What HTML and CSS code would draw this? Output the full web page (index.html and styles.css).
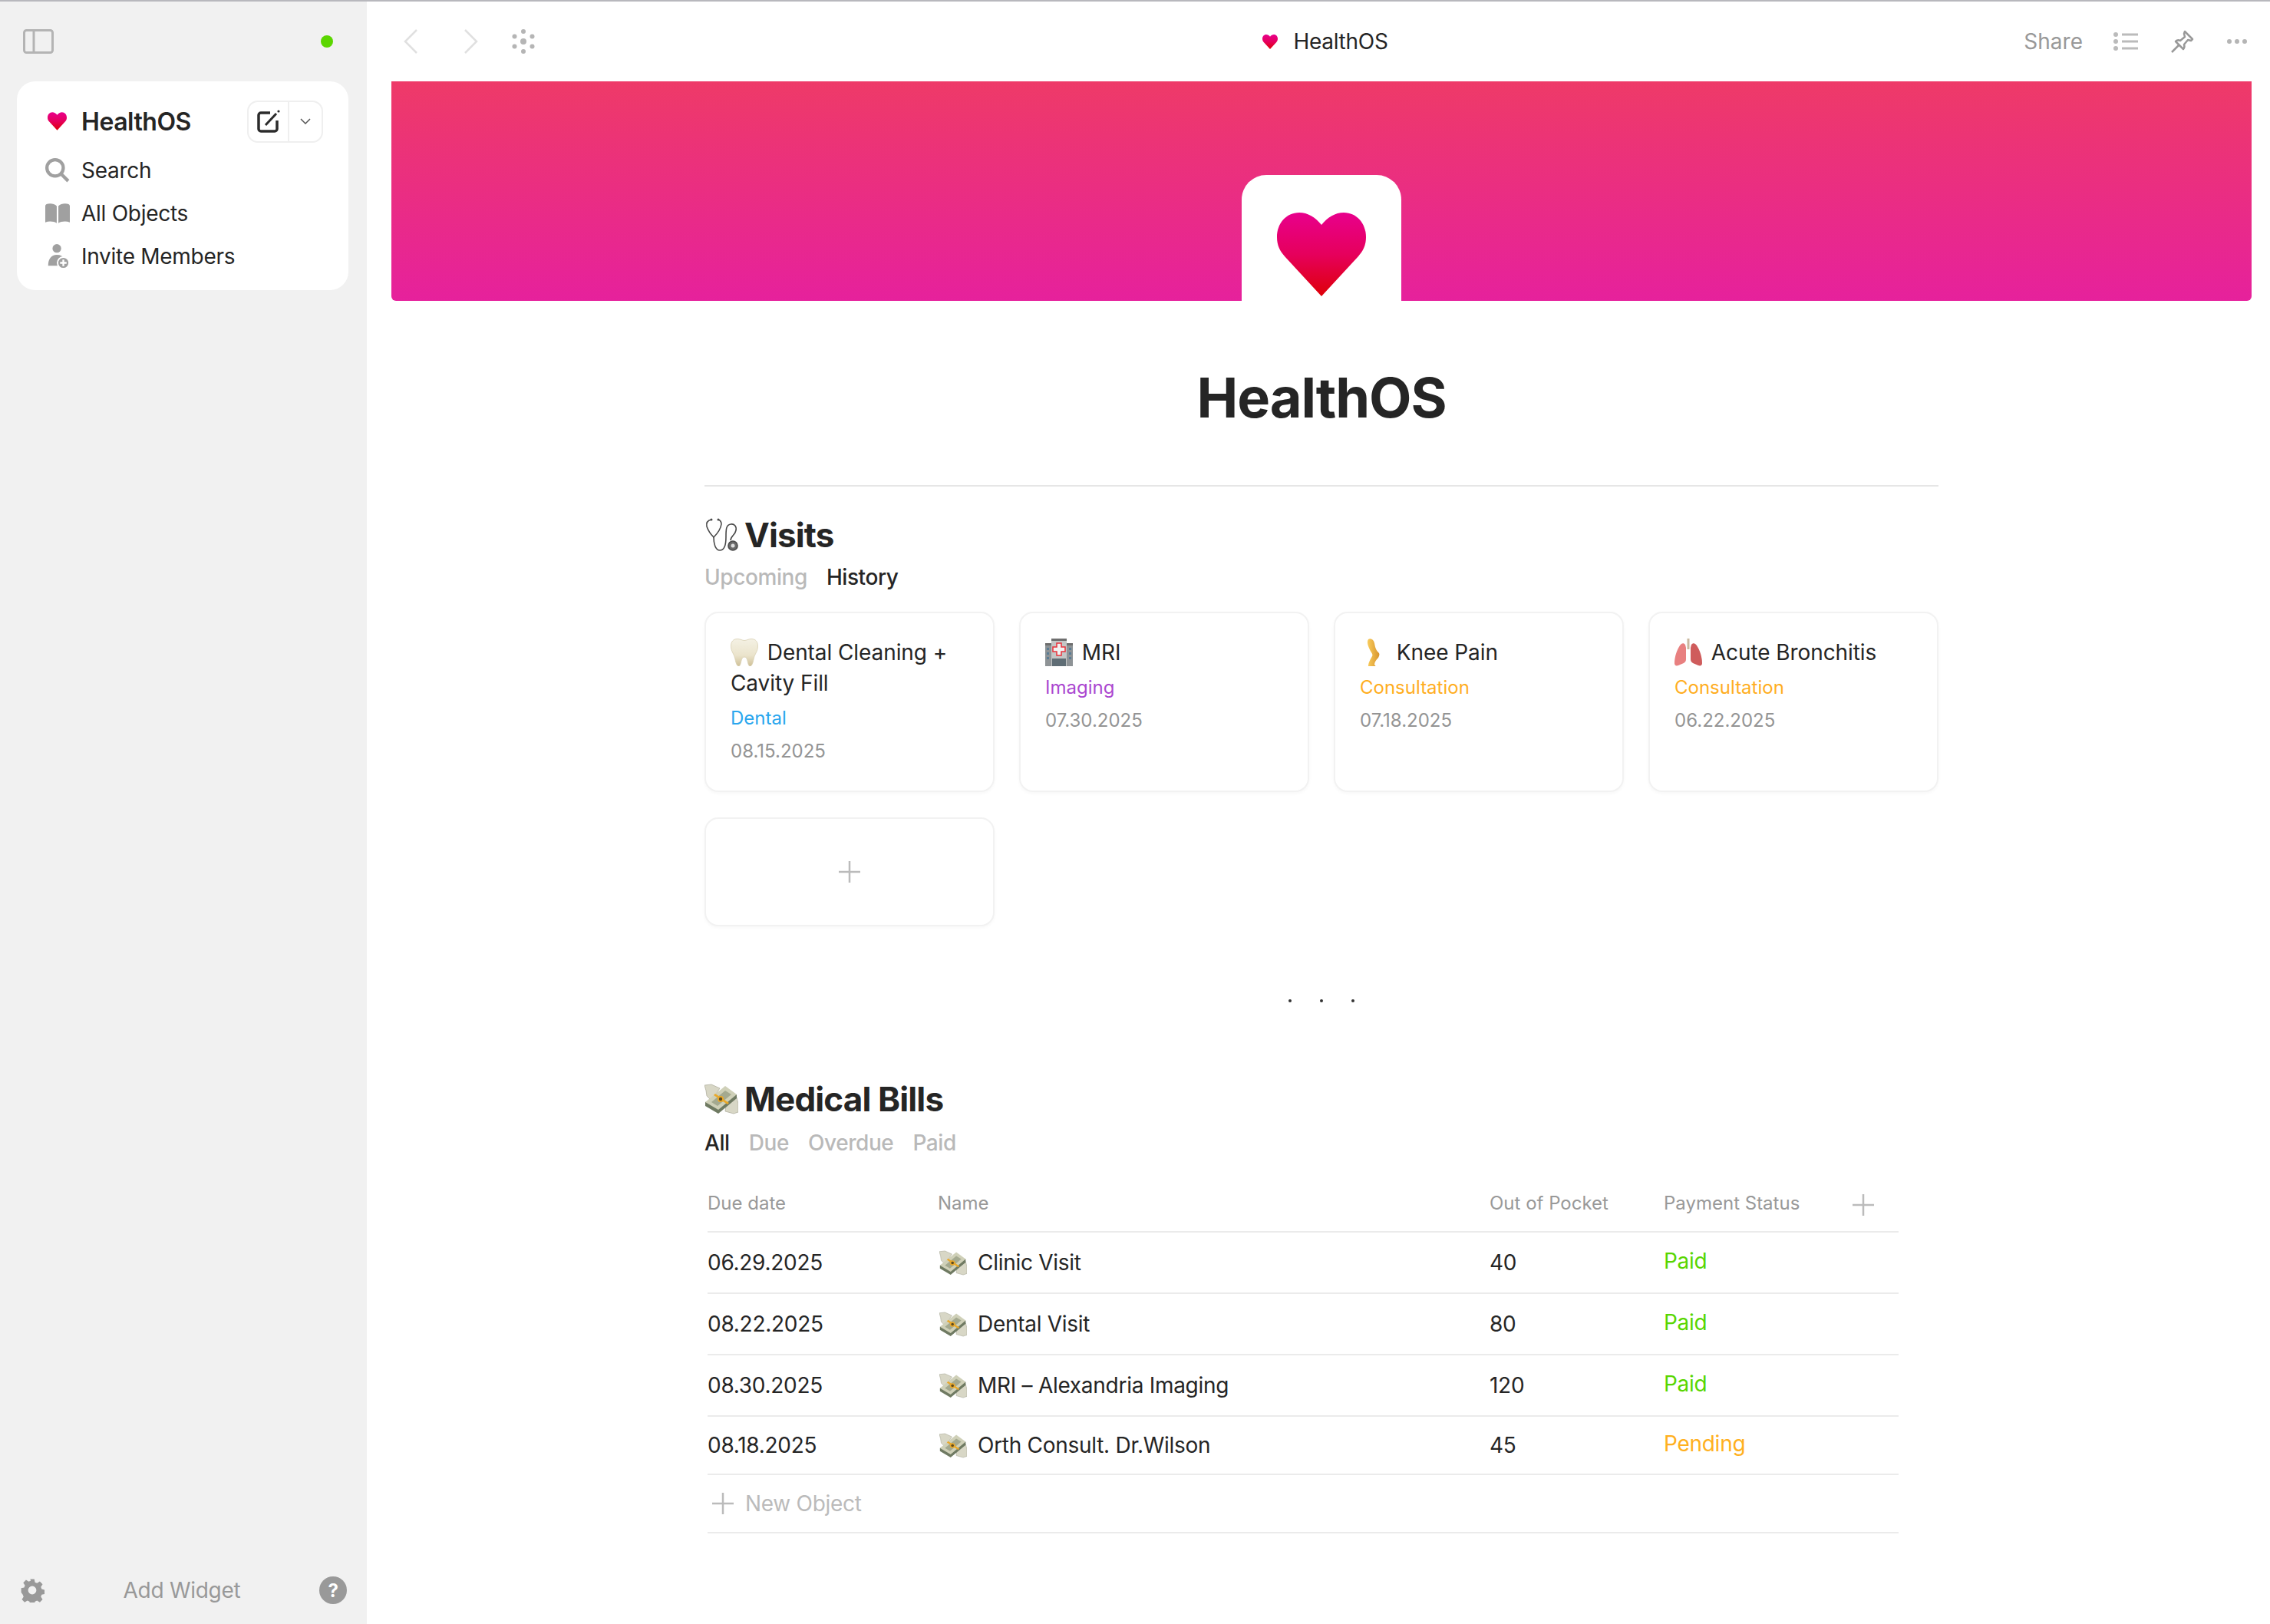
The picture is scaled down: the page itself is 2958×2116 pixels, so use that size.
FILE: index.html
```html
<!DOCTYPE html>
<html lang="en">
<head>
    <meta charset="UTF-8">
    <meta name="viewport" content="width=device-width, initial-scale=1.0">
    <title>HealthOS</title>
    <link rel="stylesheet" href="styles.css">
</head>
<body>
    <!-- Shared icons -->
    <svg class="icon-defs" aria-hidden="true">
        <defs>
            <linearGradient id="heart-fill" x1="0" y1="0" x2="0" y2="1">
                <stop offset="0" stop-color="#e8008c"/>
                <stop offset="0.5" stop-color="#e6005c"/>
                <stop offset="1" stop-color="#de0008"/>
            </linearGradient>
            <linearGradient id="tooth-fill" x1="0" y1="0" x2="0" y2="1">
                <stop offset="0" stop-color="#f4f1e4"/>
                <stop offset="0.6" stop-color="#ebe4cc"/>
                <stop offset="1" stop-color="#cfc097"/>
            </linearGradient>
            <linearGradient id="leg-fill" x1="0" y1="0" x2="1" y2="0">
                <stop offset="0" stop-color="#f9cc5c"/>
                <stop offset="1" stop-color="#d8952e"/>
            </linearGradient>
            <symbol id="heart" viewBox="0 0 116 109">
                <path fill="url(#heart-fill)" d="M58 16C50 6 40 0 29 0 12 0 0 14 0 32c0 11 4 18 10 25l48 52 48-52c6-7 10-14 10-25 0-18-12-32-29-32-11 0-21 6-29 16z"/>
            </symbol>
            <symbol id="money" viewBox="0 0 44 40">
                <path fill="#d8d7c6" stroke="#a9a897" stroke-width=".7" d="M0 2l9-1 11 5-6 9-6 6-5-5-1-7z"/>
                <path fill="#d8d7c6" stroke="#a9a897" stroke-width=".7" d="M28 28l14-10 2 8v11l-6 2-11-3z"/>
                <path fill="#6f7a62" d="M1 24v5l17 10 24-20v-5z"/>
                <path fill="#cfd0b8" d="M1 24L27 3l15 11-24 20z"/>
                <path fill="#a4a98f" d="M9 24L27 9l8 5-18 15z"/>
                <path fill="#eaa92a" d="M12 15l2-2 18 12-2 2z"/>
                <circle cx="21" cy="20" r="4" fill="#eaa92a"/>
                <circle cx="21" cy="20" r="2.200" fill="#5d4a20"/>
            </symbol>
        </defs>
    </svg>

    <aside class="sidebar">
        <div class="sidebar-top">
            <svg class="panel-icon" viewBox="0 0 40 32"><rect x="1.5" y="1.5" width="37" height="29" rx="3" fill="none" stroke="#b4b4b4" stroke-width="3"/><path d="M14 2v28" stroke="#b4b4b4" stroke-width="3"/></svg>
            <span class="status-dot"></span>
        </div>
        <div class="space-card">
            <div class="space-head">
                <svg class="space-heart"><use href="#heart"/></svg>
                <span class="space-name">HealthOS</span>
                <div class="new-btn">
                    <span class="new-btn-main">
                        <svg viewBox="0 0 30 30" width="30" height="30"><path d="M17 4H5a3 3 0 0 0-3 3v18a3 3 0 0 0 3 3h18a3 3 0 0 0 3-3V14" fill="none" stroke="#2b2b2b" stroke-width="3.500"/><path d="M11 20L25 5" stroke="#2b2b2b" stroke-width="3"/><circle cx="28" cy="2" r="1.600" fill="#2b2b2b"/></svg>
                    </span>
                    <span class="new-btn-arrow">
                        <svg viewBox="0 0 14 8" width="14" height="8"><path d="M1 1l6 6 6-6" fill="none" stroke="#555" stroke-width="1.500"/></svg>
                    </span>
                </div>
            </div>
            <div class="nav-row">
                <svg class="nav-icon" viewBox="0 0 30 30"><circle cx="12" cy="12" r="10" fill="none" stroke="#a0a0a0" stroke-width="4"/><path d="M19 19l9 9" stroke="#a0a0a0" stroke-width="4"/></svg>
                Search
            </div>
            <div class="nav-row">
                <svg class="nav-icon" viewBox="0 0 30 24"><path fill="#a0a0a0" d="M0 3c0-2 2-3 6-3 3 0 6 1 8 3v21c-3-2-9-3-14-1zM30 3c0-2-2-3-6-3-3 0-6 1-8 3v21c3-2 9-3 14-1z"/></svg>
                All Objects
            </div>
            <div class="nav-row">
                <svg class="nav-icon" viewBox="0 0 32 34"><circle cx="15" cy="6" r="6" fill="#a0a0a0"/><path fill="#a0a0a0" d="M3 30c0-9 4-15 12-15 5 0 9 2 11 6l-8 9z"/><circle cx="24" cy="26" r="8" fill="#a0a0a0" stroke="#fff" stroke-width="2"/><path d="M24 21.500v9M19.500 26h9" stroke="#fff" stroke-width="2.500"/></svg>
                Invite Members
            </div>
        </div>
        <div class="sidebar-foot">
            <svg class="gear" viewBox="0 0 32 32"><path fill="#999" fill-rule="evenodd" d="M13 0h6l1 4.500 3 1.300 4-2.500 4 4.200-2.500 3.900 1.200 3 4.300 1v6l-4.300 1-1.200 3 2.500 3.900-4 4.200-4-2.500-3 1.300-1 4.200h-6l-1-4.200-3-1.300-4 2.500-4-4.200 2.500-3.900-1.200-3L0 19v-6l4.300-1 1.200-3L3 5.100l4-4.200 4 2.500 3-1.300zM16 10a6 6 0 1 0 0 12 6 6 0 0 0 0-12z" transform="translate(1.600 1.600) scale(.9)"/></svg>
            <span class="add-widget">Add Widget</span>
            <span class="help">?</span>
        </div>
    </aside>

    <main class="main">
        <header class="topbar">
            <div class="topbar-left">
                <svg viewBox="0 0 18 32" width="18" height="32"><path d="M17 1L2 16l15 15" fill="none" stroke="#e0e0e0" stroke-width="2.500"/></svg>
                <svg viewBox="0 0 18 32" width="18" height="32"><path d="M1 1l15 15L1 31" fill="none" stroke="#e0e0e0" stroke-width="2.500"/></svg>
                <svg class="graph-icon" viewBox="0 0 30 32" width="30" height="32" fill="#b5b5b5"><circle cx="15" cy="16" r="4"/><circle cx="15" cy="3" r="3"/><circle cx="15" cy="29" r="3"/><circle cx="3.500" cy="9.500" r="3"/><circle cx="26.500" cy="9.500" r="3"/><circle cx="3.500" cy="22.500" r="3"/><circle cx="26.500" cy="22.500" r="3"/></svg>
            </div>
            <div class="topbar-title">
                <svg class="title-heart"><use href="#heart"/></svg>
                HealthOS
            </div>
            <div class="topbar-right">
                <span class="share">Share</span>
                <svg viewBox="0 0 32 24" width="32" height="24" fill="#bbb"><circle cx="3" cy="3" r="3"/><circle cx="3" cy="12" r="3"/><circle cx="3" cy="21" r="3"/><path d="M11 1.500h21v3H11zM11 10.500h21v3H11zM11 19.500h21v3H11z"/></svg>
                <svg viewBox="0 0 30 30" width="30" height="30"><path d="M18 2l10 10-2 2-4-1-5 6c1 3 0 5-1 6L6 15c2-2 4-2 6-1l6-5-1-4z" fill="none" stroke="#999" stroke-width="2.500" stroke-linejoin="round"/><path d="M10 20L1 29" stroke="#999" stroke-width="2.500"/></svg>
                <svg viewBox="0 0 26 6" width="26" height="6" fill="#b5b5b5"><circle cx="3" cy="3" r="3"/><circle cx="13" cy="3" r="3"/><circle cx="23" cy="3" r="3"/></svg>
            </div>
        </header>

        <div class="banner">
            <div class="banner-icon">
                <svg class="banner-heart"><use href="#heart"/></svg>
            </div>
        </div>

        <h1 class="page-title">HealthOS</h1>

        <div class="content">
            <section class="visits">
                <h2 class="section-title">
                    <svg class="section-emoji" viewBox="0 0 44 44" fill="none" stroke="#4a4a4a" stroke-width="1.600">
                        <path d="M9 2C4 3 2 6 3 11c2 6 6 11 9 14 3-3 9-10 10-17 0-3-1-5-4-6"/>
                        <path d="M12 25c0 8 2 17 8 17s8-8 8-17c0-10 0-16 6-17 5-1 8 3 7 8-1 6-7 8-7 13"/>
                        <circle cx="37" cy="36" r="6" fill="#6a6a6a"/>
                        <circle cx="37" cy="36" r="2.500" fill="#ddd" stroke="none"/>
                        <circle cx="9" cy="2" r="1.500" fill="#4a4a4a" stroke="none"/>
                        <circle cx="18" cy="2" r="1.500" fill="#4a4a4a" stroke="none"/>
                    </svg>
                    Visits
                </h2>
                <div class="tabs">
                    <span class="tab">Upcoming</span>
                    <span class="tab tab-active">History</span>
                </div>
                <div class="card-grid">
                    <div class="card">
                        <div class="card-title">
                            <svg class="card-emoji" viewBox="0 0 36 36"><path fill="url(#tooth-fill)" stroke="#d8cfb2" stroke-width=".8" d="M9 .5c4 0 6 2 9 2s5-2 9-2c6 0 8.500 4 8.500 9.500 0 7-4 10-5 15-1 4-2 11-5 11-4 0-2-12-7.500-12s-3.500 12-7.500 12c-3 0-4-7-5-11C4.500 20 .5 17 .5 10 .5 4.500 3 .5 9 .5z"/></svg>
                            Dental Cleaning + Cavity Fill
                        </div>
                        <div class="card-tag tag-dental">Dental</div>
                        <div class="card-date">08.15.2025</div>
                    </div>
                    <div class="card">
                        <div class="card-title">
                            <svg class="card-emoji" viewBox="0 0 36 36"><path fill="#8e9396" d="M0 8h36v28H0z"/><path fill="#c4c6c6" d="M8 2h20v34H8z"/><path fill="#6e6e6e" d="M8 0h20v3H8zM0 6h8v3H0zM28 6h8v3h-8z"/><path fill="#5a7c94" d="M2 12h3v3H2zM2 18h3v3H2zM2 24h3v3H2zM31 12h3v3h-3zM31 18h3v3h-3zM31 24h3v3h-3z"/><path fill="#f2f2f2" stroke="#e8323c" stroke-width="1.500" d="M15 6h6v5h5v6h-5v5h-6v-5h-5v-6h5z"/><path fill="#5f6d75" d="M9 26h18v10H9z"/></svg>
                            MRI
                        </div>
                        <div class="card-tag tag-imaging">Imaging</div>
                        <div class="card-date">07.30.2025</div>
                    </div>
                    <div class="card">
                        <div class="card-title">
                            <svg class="card-emoji" viewBox="0 0 36 36"><path fill="url(#leg-fill)" d="M11 1c3-2 7 0 8 5 1 6 2 9 6 13 1 2 0 4-1 6-3 3-5 6-5 9 1 1 2 2 1 2h-9c0-5 3-9 5-13 1-2 0-3-1-5-3-5-7-13-4-17z"/></svg>
                            Knee Pain
                        </div>
                        <div class="card-tag tag-consult">Consultation</div>
                        <div class="card-date">07.18.2025</div>
                    </div>
                    <div class="card">
                        <div class="card-title">
                            <svg class="card-emoji" viewBox="0 0 36 36"><path fill="#c9b8a0" d="M16.500 0h3v14h-3z"/><path fill="#e88080" d="M14 8c-2-3-5-2-7 1-4 6-7 15-7 23 0 3 2 4 5 3l7-3c2-1 3-3 3-5V12z"/><path fill="#cf5c5c" d="M22 8c2-3 5-2 7 1 4 6 7 15 7 23 0 3-2 4-5 3l-7-3c-2-1-3-3-3-5V12z"/></svg>
                            Acute Bronchitis
                        </div>
                        <div class="card-tag tag-consult">Consultation</div>
                        <div class="card-date">06.22.2025</div>
                    </div>
                    <div class="card card-add">
                        <svg viewBox="0 0 28 28" width="28" height="28"><path d="M14 0v28M0 14h28" stroke="#bbb" stroke-width="2.500"/></svg>
                    </div>
                </div>
            </section>

            <div class="separator"><span></span><span></span><span></span></div>

            <section class="bills">
                <h2 class="section-title">
                    <svg class="section-emoji"><use href="#money"/></svg>
                    Medical Bills
                </h2>
                <div class="tabs tabs-bills">
                    <span class="tab tab-active">All</span>
                    <span class="tab">Due</span>
                    <span class="tab">Overdue</span>
                    <span class="tab">Paid</span>
                </div>
                <div class="bills-table">
                    <div class="bill-row bill-head">
                        <span>Due date</span>
                        <span>Name</span>
                        <span>Out of Pocket</span>
                        <span>Payment Status</span>
                        <svg class="head-plus" viewBox="0 0 28 28" width="28" height="28"><path d="M14 0v28M0 14h28" stroke="#bbb" stroke-width="2.500"/></svg>
                    </div>
                    <div class="bill-row">
                        <span>06.29.2025</span>
                        <span class="bill-name"><svg class="bill-emoji"><use href="#money"/></svg>Clinic Visit</span>
                        <span>40</span>
                        <span class="status-paid">Paid</span>
                    </div>
                    <div class="bill-row">
                        <span>08.22.2025</span>
                        <span class="bill-name"><svg class="bill-emoji"><use href="#money"/></svg>Dental Visit</span>
                        <span>80</span>
                        <span class="status-paid">Paid</span>
                    </div>
                    <div class="bill-row">
                        <span>08.30.2025</span>
                        <span class="bill-name"><svg class="bill-emoji"><use href="#money"/></svg>MRI – Alexandria Imaging</span>
                        <span>120</span>
                        <span class="status-paid">Paid</span>
                    </div>
                    <div class="bill-row bill-row-last">
                        <span>08.18.2025</span>
                        <span class="bill-name"><svg class="bill-emoji"><use href="#money"/></svg>Orth Consult. Dr.Wilson</span>
                        <span>45</span>
                        <span class="status-pending">Pending</span>
                    </div>
                    <div class="new-object">
                        <svg viewBox="0 0 28 28" width="28" height="28"><path d="M14 0v28M0 14h28" stroke="#bbb" stroke-width="2.500"/></svg>
                        New Object
                    </div>
                </div>
            </section>
        </div>
    </main>
</body>
</html>
```

FILE: styles.css
```css
/* General styles */
* {
    box-sizing: border-box;
}

body {
    font-family: Inter, "Liberation Sans", sans-serif;
    font-size: 28px;
    letter-spacing: -0.01em;
    color: #252525;
    margin: 0;
    height: 100vh;
    display: flex;
    overflow: hidden;
    border-top: 2px solid #b8b8bd;
    background: #ffffff;
}

.icon-defs {
    display: block;
    width: 0;
    height: 0;
}

/* Sidebar */
.sidebar {
    width: 478px;
    flex-shrink: 0;
    background: #f1f1f1;
    display: flex;
    flex-direction: column;
}

.sidebar-top {
    height: 104px;
    padding: 0 20px 0 30px;
    display: flex;
    align-items: center;
    justify-content: space-between;
}

.panel-icon {
    width: 40px;
    height: 32px;
}

.status-dot {
    width: 16px;
    height: 16px;
    border-radius: 50%;
    background: #5bd600;
    margin-right: 24px;
}

.space-card {
    margin: 0 24px 0 22px;
    height: 272px;
    padding: 25px 0 0 37px;
    background: #ffffff;
    border-radius: 24px;
}

.space-head {
    display: flex;
    align-items: center;
    height: 54px;
    margin-bottom: 9px;
}

.space-heart {
    width: 25px;
    height: 24px;
    margin: 0 19px 0 3px;
}

.space-name {
    font-size: 32px;
    font-weight: 600;
    letter-spacing: -0.015em;
    flex: 1;
}

.new-btn {
    display: flex;
    width: 99px;
    height: 55px;
    margin-right: 33px;
    border: 2px solid #efefef;
    border-radius: 14px;
}

.new-btn-main {
    width: 53px;
    display: flex;
    align-items: center;
    justify-content: center;
    border-right: 2px solid #efefef;
}

.new-btn-arrow {
    flex: 1;
    display: flex;
    align-items: center;
    justify-content: center;
}

.nav-row {
    display: flex;
    align-items: center;
    height: 56px;
}

.nav-icon {
    width: 32px;
    height: 32px;
    margin-right: 15px;
}

.sidebar-foot {
    margin-top: auto;
    height: 88px;
    padding: 0 26px 0 26px;
    display: flex;
    align-items: center;
    justify-content: space-between;
}

.gear {
    width: 32px;
    height: 32px;
}

.add-widget {
    color: #999;
}

.help {
    width: 36px;
    height: 36px;
    border-radius: 50%;
    background: #999;
    color: #ffffff;
    font-size: 24px;
    font-weight: 700;
    display: flex;
    align-items: center;
    justify-content: center;
}

/* Main column */
.main {
    flex: 1;
    min-width: 0;
    display: flex;
    flex-direction: column;
}

.topbar {
    height: 104px;
    flex-shrink: 0;
    padding: 0 30px 0 48px;
    display: grid;
    grid-template-columns: 1fr auto 1fr;
    align-items: center;
}

.topbar-left {
    display: flex;
    align-items: center;
    gap: 61px;
}

.graph-icon {
    margin-left: -17px;
}

.topbar-title {
    display: flex;
    align-items: center;
}

.title-heart {
    width: 20px;
    height: 19px;
    margin-right: 20px;
}

.topbar-right {
    display: flex;
    align-items: center;
    justify-content: flex-end;
    gap: 43px;
}

.share {
    color: #999;
    letter-spacing: 0;
    margin-right: -3px;
}

/* Banner */
.banner {
    height: 286px;
    flex-shrink: 0;
    margin: 0 24px 0 32px;
    background: linear-gradient(180deg, #ee3a68, #e6219c);
    display: flex;
    justify-content: center;
    align-items: flex-end;
    border-radius: 0 0 6px 6px;
}

.banner-icon {
    width: 208px;
    height: 164px;
    background: #ffffff;
    border-radius: 32px 32px 0 0;
    padding: 49px 0 0 46px;
}

.banner-heart {
    width: 116px;
    height: 109px;
    display: block;
}

.page-title {
    margin: 88px 0 0;
    padding-left: 8px;
    text-align: center;
    font-size: 72px;
    line-height: 76px;
    font-weight: 700;
    letter-spacing: -0.015em;
}

/* Content column */
.content {
    width: 1608px;
    margin: 76px 0 0 440px;
    border-top: 2px solid #e6e6e6;
}

.visits {
    padding-top: 33px;
}

.section-title {
    display: flex;
    align-items: center;
    gap: 8px;
    height: 60px;
    margin: 0;
    font-size: 44px;
    font-weight: 700;
    letter-spacing: -0.02em;
}

.section-emoji {
    width: 44px;
    height: 44px;
}

.tabs {
    display: flex;
    gap: 25px;
    height: 40px;
    margin-top: 5px;
    line-height: 40px;
    font-weight: 500;
    letter-spacing: -0.015em;
}

.tabs-bills {
    margin-top: 7px;
}

.tab {
    color: #b9b9b9;
}

.tab-active {
    color: #252525;
}

.card-grid {
    display: grid;
    grid-template-columns: repeat(4, 1fr);
    gap: 33px 32px;
    margin-top: 25px;
}

.card {
    background: #ffffff;
    border: 2px solid #f2f2f2;
    border-radius: 18px;
    box-shadow: 0 2px 4px rgba(0, 0, 0, 0.03);
    padding: 31px 20px 28px 32px;
    min-height: 235px;
}

.card-title {
    line-height: 40px;
    letter-spacing: -0.003em;
}

.card-emoji {
    width: 36px;
    height: 36px;
    margin-right: 4px;
    vertical-align: -8px;
}

.card-tag {
    font-size: 24px;
    letter-spacing: 0;
    line-height: 43px;
    margin-top: 4px;
}

.card-date {
    font-size: 24px;
    letter-spacing: 0;
    line-height: 44px;
    color: #949494;
}

.tag-dental {
    color: #2aa7ee;
}

.tag-imaging {
    color: #ab47d0;
}

.tag-consult {
    color: #ffae1f;
}

.card-add {
    min-height: 142px;
    padding: 0;
    display: flex;
    align-items: center;
    justify-content: center;
}

.separator {
    display: flex;
    justify-content: center;
    gap: 37px;
    margin-top: 95px;
}

.separator span {
    width: 4px;
    height: 4px;
    border-radius: 50%;
    background: #333;
}

.bills {
    padding-top: 96px;
}

/* Bills table */
.bills-table {
    width: 1552px;
    margin: 21px 0 0 4px;
}

.bill-row {
    display: grid;
    grid-template-columns: 300px 719px 227px 246px 60px;
    align-items: center;
    height: 80px;
    border-bottom: 2px solid #ebebeb;
}

.bill-head {
    height: 76px;
    font-size: 24px;
    letter-spacing: 0;
    color: #999;
}

.bill-row-last {
    height: 76px;
}

.head-plus {
    margin-top: 6px;
}

.bill-name {
    display: flex;
    align-items: center;
}

.bill-emoji {
    width: 36px;
    height: 33px;
    margin: 0 14px 0 2px;
}

.status-paid {
    color: #58d600;
    margin-bottom: 5px;
}

.status-pending {
    color: #ffb020;
    margin-bottom: 5px;
}

.new-object {
    height: 76px;
    padding-left: 6px;
    display: flex;
    align-items: center;
    gap: 15px;
    color: #bbb;
    border-bottom: 2px solid #ebebeb;
}
```
